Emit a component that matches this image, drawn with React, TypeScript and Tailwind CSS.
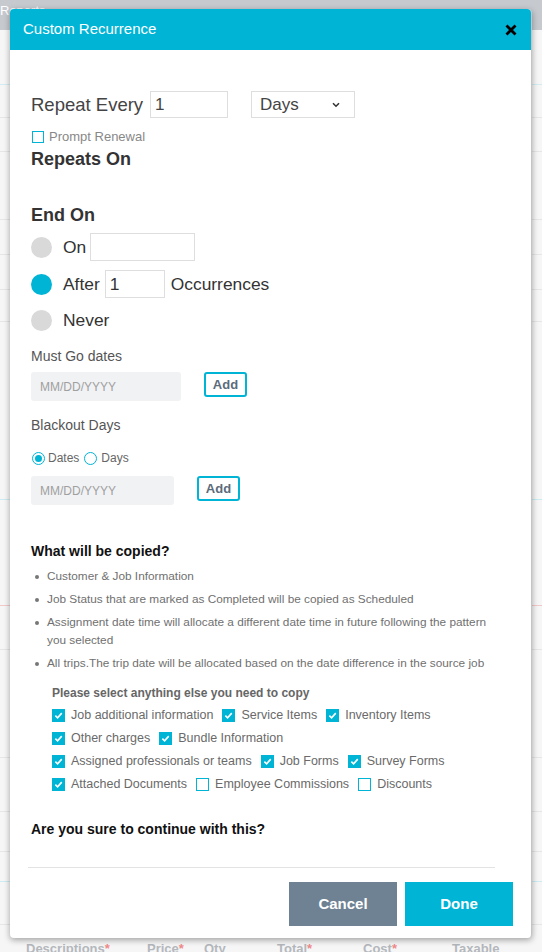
import { Fragment } from 'react';

const bullets = [
  'Customer & Job Information',
  'Job Status that are marked as Completed will be copied as Scheduled',
  'Assignment date time will allocate a different date time in future following the pattern you selected',
  'All trips.The trip date will be allocated based on the date difference in the source job',
];

const copyRows: { label: string; checked: boolean }[][] = [
  [
    { label: 'Job additional information', checked: true },
    { label: 'Service Items', checked: true },
    { label: 'Inventory Items', checked: true },
  ],
  [
    { label: 'Other charges', checked: true },
    { label: 'Bundle Information', checked: true },
  ],
  [
    { label: 'Assigned professionals or teams', checked: true },
    { label: 'Job Forms', checked: true },
    { label: 'Survey Forms', checked: true },
  ],
  [
    { label: 'Attached Documents', checked: true },
    { label: 'Employee Commissions', checked: false },
    { label: 'Discounts', checked: false },
  ],
];

// background page rows: [height, border colour]
const bgRows: [number, string][] = [
  [55, '#d3ecf2'],
  [33, '#e6e6e6'],
  [34, '#e6e6e6'],
  [68, '#e6e6e6'],
  [35, '#e6e6e6'],
  [35, '#e6e6e6'],
  [32, '#e6e6e6'],
  [178, '#cdebf2'],
  [106, '#f2c9c9'],
  [44, '#e6e6e6'],
  [108, '#e6e6e6'],
  [54, '#e6e6e6'],
  [40, '#e6e6e6'],
  [30, '#cdebf2'],
  [43, '#e6e6e6'],
];

function CheckBox({ checked }: { checked: boolean }) {
  if (!checked) {
    return <span className="block w-[13px] h-[13px] shrink-0 border border-[#00b4d6] bg-white" />;
  }
  return (
    <span className="w-[13px] h-[13px] shrink-0 bg-[#00b4d6] flex items-center justify-center">
      <svg width="9" height="9" viewBox="0 0 10 10">
        <path d="M1.5 5.2 L4 7.6 L8.6 2.4" fill="none" stroke="#fff" strokeWidth="1.8" />
      </svg>
    </span>
  );
}

function Dot({ active }: { active: boolean }) {
  return (
    <span
      className={`w-[21px] h-[21px] rounded-full shrink-0 ${active ? 'bg-[#00b4d6]' : 'bg-[#d9d9d9]'}`}
    />
  );
}

function DateAdd({ inputW }: { inputW: string }) {
  return (
    <div className="flex items-start gap-[23px]">
      <div
        className={`${inputW} h-[29px] rounded-[3px] bg-[#f1f2f4] pl-[9px] flex items-center text-[12px] text-[#a0a0a0]`}
      >
        MM/DD/YYYY
      </div>
      <button
        type="button"
        className="w-[43px] h-[25px] rounded-[3px] border-2 border-[#00b4d6] text-[13px] font-bold text-[#5b6b7b] leading-none"
      >
        Add
      </button>
    </div>
  );
}

export default function App() {
  return (
    <div
      className="relative w-[542px] h-[952px] overflow-hidden bg-[#f6f6f6]"
      style={{ fontFamily: '"Liberation Sans", Arial, sans-serif' }}
    >
      {/* page behind the dialog */}
      <div className="h-[30px] bg-[#c6c9ce] text-[13px] text-white pt-[1px]">Reports</div>
      {bgRows.map(([h, c], i) => (
        <div key={i} style={{ height: h, borderBottom: `1px solid ${c}` }} />
      ))}
      <div className="absolute left-[26px] top-[939px] flex text-[13px] font-bold text-[#b4b8bd]">
        <span className="w-[121px]">
          Descriptions<span className="text-[#f08a8a]">*</span>
        </span>
        <span className="w-[57px]">
          Price<span className="text-[#f08a8a]">*</span>
        </span>
        <span className="w-[73px]">Qty</span>
        <span className="w-[86px]">
          Total<span className="text-[#f08a8a]">*</span>
        </span>
        <span className="w-[89px]">
          Cost<span className="text-[#f08a8a]">*</span>
        </span>
        <span>Taxable</span>
      </div>

      {/* dialog */}
      <div className="absolute left-[10px] top-[9px] w-[522px] rounded-[4px] bg-white shadow-[0_2px_6px_rgba(0,0,0,0.35)] border-r border-[#c4c4c4]">
        <div className="h-[41px] rounded-t-[4px] bg-[#00b4d6] flex items-center justify-between pl-[13px] pr-[14px]">
          <span className="text-[15px] text-white">Custom Recurrence</span>
          <svg width="12" height="12" viewBox="0 0 12 12">
            <path d="M1.5 1.5 L10.5 10.5 M10.5 1.5 L1.5 10.5" stroke="#000" strokeWidth="2.8" />
          </svg>
        </div>

        <div className="pl-[21px] pt-[41px]">
          <div className="flex items-center h-[27px] text-[18.5px] text-[#444]">
            <span>Repeat Every</span>
            <div className="ml-[7px] w-[78px] h-[27px] border border-[#dedede] pl-[4px] flex items-center text-[17px]">
              1
            </div>
            <div className="ml-[23px] w-[104px] h-[27px] border border-[#dedede] pl-[8px] pr-[14px] flex items-center justify-between text-[17px]">
              <span>Days</span>
              <svg width="8" height="6" viewBox="0 0 8 6">
                <path d="M1 1.2 L4 4.2 L7 1.2" fill="none" stroke="#333" strokeWidth="1.6" />
              </svg>
            </div>
          </div>

          <div className="mt-[12px] flex items-center gap-[5px] h-[14px]">
            <span className="ml-[1px] w-[12px] h-[12px] border border-[#00b4d6]" />
            <span className="text-[13px] text-[#888]">Prompt Renewal</span>
          </div>

          <div className="mt-[5px] text-[18px] leading-[20px] font-bold text-[#333]">Repeats On</div>
          <div className="mt-[36px] text-[18px] leading-[20px] font-bold text-[#333]">End On</div>

          <div className="mt-[8px] flex items-center h-[28px] text-[17.4px] text-[#333]">
            <Dot active={false} />
            <span className="ml-[11px]">On</span>
            <div className="ml-[4px] w-[105px] h-[28px] border border-[#dedede]" />
          </div>
          <div className="mt-[9px] flex items-center h-[28px] text-[17.4px] text-[#333]">
            <Dot active />
            <span className="ml-[11px]">After</span>
            <div className="ml-[5px] w-[60px] h-[28px] border border-[#dedede] pl-[4px] flex items-center">1</div>
            <span className="ml-[6px]">Occurrences</span>
          </div>
          <div className="mt-[8px] flex items-center h-[28px] text-[17.4px] text-[#333]">
            <Dot active={false} />
            <span className="ml-[11px]">Never</span>
          </div>

          <div className="mt-[13px] text-[14px] leading-[18px] text-[#555]">Must Go dates</div>
          <div className="mt-[7px]">
            <DateAdd inputW="w-[150px]" />
          </div>

          <div className="mt-[15px] text-[14px] leading-[18px] text-[#555]">Blackout Days</div>
          <div className="mt-[17px] flex items-center h-[14px] text-[12px] text-[#666]">
            <span className="ml-[1px] w-[13px] h-[13px] rounded-full border border-[#00b4d6] flex items-center justify-center">
              <span className="w-[7px] h-[7px] rounded-full bg-[#00b4d6]" />
            </span>
            <span className="ml-[3px]">Dates</span>
            <span className="ml-[5px] w-[13px] h-[13px] rounded-full border border-[#00b4d6]" />
            <span className="ml-[4px]">Days</span>
          </div>
          <div className="mt-[11px]">
            <DateAdd inputW="w-[143px]" />
          </div>

          <div className="mt-[37px] text-[14px] leading-[18px] font-bold text-[#111]">What will be copied?</div>
          <ul className="mt-[7px] pr-[36px] space-y-[5px]">
            {bullets.map((b) => (
              <li key={b} className="flex text-[11.8px] leading-[18px] text-[#707070]">
                <span className="w-[16px] shrink-0 pt-[8px] pl-[4px]">
                  <span className="block w-[4px] h-[4px] rounded-full bg-[#777]" />
                </span>
                <span>{b}</span>
              </li>
            ))}
          </ul>

          <div className="pl-[21px]">
            <div className="mt-[13px] text-[12px] leading-[16px] font-bold text-[#666]">
              Please select anything else you need to copy
            </div>
            <div className="mt-[5px] space-y-[5px]">
              {copyRows.map((row, i) => (
                <div key={i} className="flex items-center h-[18px] text-[12.5px] text-[#6a6a6a]">
                  {row.map((item, j) => (
                    <Fragment key={item.label}>
                      <span className={j === 0 ? 'block' : 'block ml-[9px]'}>
                        <CheckBox checked={item.checked} />
                      </span>
                      <span className="ml-[6px]">{item.label}</span>
                    </Fragment>
                  ))}
                </div>
              ))}
            </div>
          </div>

          <div className="mt-[27px] text-[14px] leading-[18px] font-bold text-[#111]">
            Are you sure to continue with this?
          </div>
        </div>

        <div className="mt-[29px] ml-[18px] mr-[36px] border-t border-[#e3e3e3]" />
        <div className="mt-[14px] pb-[12px] pr-[18px] flex justify-end gap-[8px]">
          <button
            type="button"
            className="w-[108px] h-[44px] bg-[#6e8294] text-white text-[15px] font-bold"
          >
            Cancel
          </button>
          <button
            type="button"
            className="w-[108px] h-[44px] bg-[#00b4d6] text-white text-[15px] font-bold"
          >
            Done
          </button>
        </div>
      </div>
    </div>
  );
}
